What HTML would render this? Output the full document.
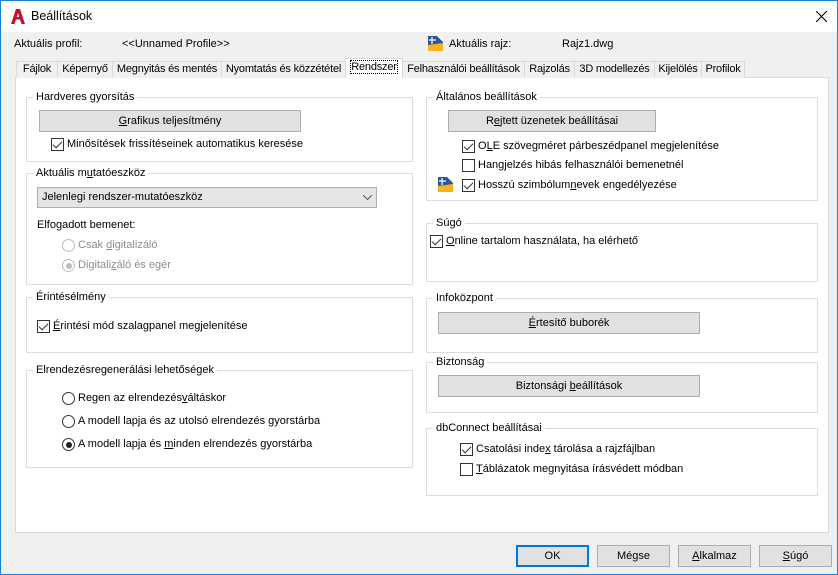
<!DOCTYPE html>
<html><head><meta charset="utf-8"><style>
*{box-sizing:border-box}
body{margin:0;width:838px;height:575px;overflow:hidden;font-family:"Liberation Sans",sans-serif;font-size:11px;color:#000;background:#f0f0f0}
.win{position:absolute;left:0;top:0;width:838px;height:575px;border:1px solid #1883d7;background:#f0f0f0}
.title{position:absolute;left:0;top:0;width:836px;height:31px;background:#fff}
.a{position:absolute;white-space:nowrap}
.tab{position:absolute;top:60px;height:17px;border:1px solid #d9d9d9;border-bottom:none;background:#f0f0f0;text-align:center;line-height:15px;white-space:nowrap;overflow:hidden;letter-spacing:-0.2px}
.panel{position:absolute;left:14px;top:76px;width:814px;height:456px;background:#fff;border:1px solid #d9d9d9}
.grp{position:absolute;border:1px solid #dcdcdc}
.grp>span{position:absolute;top:-8px;left:6px;background:#fff;padding:0 3px;line-height:14px;white-space:nowrap}
.btn{position:absolute;height:22px;background:#e1e1e1;border:1px solid #adadad;text-align:center;line-height:20px;white-space:nowrap}
.cb{position:absolute;width:13px;height:13px;border:1px solid #333;background:#fff}
.cb.c::after{content:"";position:absolute;left:3px;top:0px;width:4px;height:8px;border:solid #333;border-width:0 1.5px 1.5px 0;transform:rotate(45deg)}
.rb{position:absolute;width:13px;height:13px;border:1px solid #333;border-radius:50%;background:#fff}
.rb.on::after{content:"";position:absolute;left:2.5px;top:2.5px;width:6px;height:6px;border-radius:50%;background:#222}
.rb.dis{border-color:#bcbcbc}.rb.dis.on::after{background:#bcbcbc}
.g{color:#8d8d8d}
u{text-decoration:underline}
</style></head><body><div class="win">
<div class="title"></div>
<svg class="a" style="left:10px;top:8px" width="14" height="15" viewBox="0 0 14 15"><path d="M0 15 L5 0 H9 L14 15 H10.5 L9 10.5 H5 L3.5 15Z M5.8 8 H8.2 L7 4Z" fill="#c8102e"/></svg>
<div class="a" style="left:30px;top:8px;font-size:12.5px">Beállítások</div>
<svg class="a" style="left:815px;top:10px" width="11" height="11"><path d="M0 0L11 11M11 0L0 11" stroke="#000" stroke-width="1.1"/></svg>
<div class="a" style="left:13px;top:37px">Aktuális profil:</div>
<div class="a" style="left:121px;top:37px">&lt;&lt;Unnamed Profile&gt;&gt;</div>
<svg class="a" style="left:427px;top:35px" width="15" height="15"><rect width="15" height="15" fill="#2b5797"/><path d="M0 15V9L15 7V15Z" fill="#f6b31a"/><path d="M4 1V8M1 4H8" stroke="#fff" stroke-width="1.2"/><path d="M9 0L15 6V0Z" fill="#fff"/></svg>
<div class="a" style="left:448px;top:37px">Aktuális rajz:</div>
<div class="a" style="left:561px;top:37px">Rajz1.dwg</div>
<div class="panel"></div>
<div class="tab" style="left:15px;width:42px">Fájlok</div>
<div class="tab" style="left:56px;width:56px">Képernyő</div>
<div class="tab" style="left:111px;width:110px">Megnyitás és mentés</div>
<div class="tab" style="left:220px;width:125px">Nyomtatás és közzététel</div>
<div class="tab" style="left:344px;top:57px;height:20px;width:58px;background:#fff;line-height:17px"><span style="outline:1px dotted #000">Rendszer</span></div>
<div class="tab" style="left:401px;width:123px">Felhasználói beállítások</div>
<div class="tab" style="left:523px;width:51px">Rajzolás</div>
<div class="tab" style="left:573px;width:81px">3D modellezés</div>
<div class="tab" style="left:653px;width:48px">Kijelölés</div>
<div class="tab" style="left:700px;width:44px">Profilok</div>

<div class="grp" style="left:25px;top:96px;width:387px;height:65px"><span>Hardveres gyorsítás</span></div>
<div class="btn" style="left:38px;top:109px;width:262px"><u>G</u>rafikus teljesítmény</div>
<div class="cb c" style="left:50px;top:137px"></div><div class="a" style="left:66px;top:137px">Minősítések frissítéseinek automatikus keresése</div>

<div class="grp" style="left:25px;top:172px;width:387px;height:112px"><span>Aktuális m<u>u</u>tatóeszköz</span></div>
<div class="a" style="left:36px;top:186px;width:340px;height:21px;background:#e5e5e5;border:1px solid #adadad;padding:3px 4px">Jelenlegi rendszer-mutatóeszköz</div>
<svg class="a" style="left:362px;top:194px" width="9" height="5"><path d="M0 0L4.5 4.5L9 0" stroke="#555" fill="none"/></svg>
<div class="a" style="left:36px;top:218px">Elfogadott bemenet:</div>
<div class="rb dis" style="left:61px;top:238px"></div><div class="a g" style="left:77px;top:238px">Csak <u>d</u>igitalizáló</div>
<div class="rb dis on" style="left:61px;top:258px"></div><div class="a g" style="left:77px;top:258px">Digitali<u>z</u>áló és egér</div>

<div class="grp" style="left:25px;top:296px;width:387px;height:56px"><span>Érintésélmény</span></div>
<div class="cb c" style="left:36px;top:319px"></div><div class="a" style="left:52px;top:319px"><u>É</u>rintési mód szalagpanel megjelenítése</div>

<div class="grp" style="left:25px;top:369px;width:387px;height:98px"><span>Elrendezésregenerálási lehetőségek</span></div>
<div class="rb" style="left:61px;top:391px"></div><div class="a" style="left:77px;top:391px">Regen az elrendezés<u>v</u>áltáskor</div>
<div class="rb" style="left:61px;top:414px"></div><div class="a" style="left:77px;top:414px">A modell lapja és az utolsó elrendezés gyorstárba</div>
<div class="rb on" style="left:61px;top:437px"></div><div class="a" style="left:77px;top:437px">A modell lapja és <u>m</u>inden elrendezés gyorstárba</div>

<div class="grp" style="left:425px;top:96px;width:392px;height:104px"><span>Általános beállítások</span></div>
<div class="btn" style="left:447px;top:109px;width:208px">R<u>e</u>jtett üzenetek beállításai</div>
<div class="cb c" style="left:461px;top:139px"></div><div class="a" style="left:477px;top:139px">O<u>L</u>E szövegméret párbeszédpanel megjelenítése</div>
<div class="cb" style="left:461px;top:158px"></div><div class="a" style="left:477px;top:158px">Hang<u>j</u>elzés hibás felhasználói bemenetnél</div>
<svg class="a" style="left:437px;top:176px" width="15" height="15"><rect width="15" height="15" fill="#2b5797"/><path d="M0 15V9L15 7V15Z" fill="#f6b31a"/><path d="M4 1V8M1 4H8" stroke="#fff" stroke-width="1.2"/><path d="M9 0L15 6V0Z" fill="#fff"/></svg>
<div class="cb c" style="left:461px;top:178px"></div><div class="a" style="left:477px;top:178px">Hosszú szimbólum<u>n</u>evek engedélyezése</div>

<div class="grp" style="left:425px;top:222px;width:392px;height:59px"><span>Súgó</span></div>
<div class="cb c" style="left:429px;top:234px"></div><div class="a" style="left:445px;top:234px"><u>O</u>nline tartalom használata, ha elérhető</div>

<div class="grp" style="left:425px;top:297px;width:392px;height:55px"><span>Infoközpont</span></div>
<div class="btn" style="left:437px;top:311px;width:262px"><u>É</u>rtesítő buborék</div>

<div class="grp" style="left:425px;top:361px;width:392px;height:51px"><span>Biztonság</span></div>
<div class="btn" style="left:437px;top:374px;width:262px">Biztonsági <u>b</u>eállítások</div>

<div class="grp" style="left:425px;top:427px;width:392px;height:68px"><span>dbConnect beállításai</span></div>
<div class="cb c" style="left:459px;top:442px"></div><div class="a" style="left:475px;top:442px">Csatolási inde<u>x</u> tárolása a rajzfájlban</div>
<div class="cb" style="left:459px;top:462px"></div><div class="a" style="left:475px;top:462px"><u>T</u>áblázatok megnyitása írásvédett módban</div>

<div class="btn" style="left:515px;top:544px;width:73px;border:2px solid #0078d7;line-height:18px">OK</div>
<div class="btn" style="left:596px;top:544px;width:73px">Mégse</div>
<div class="btn" style="left:677px;top:544px;width:73px"><u>A</u>lkalmaz</div>
<div class="btn" style="left:758px;top:544px;width:73px"><u>S</u>úgó</div>
</div></body></html>
